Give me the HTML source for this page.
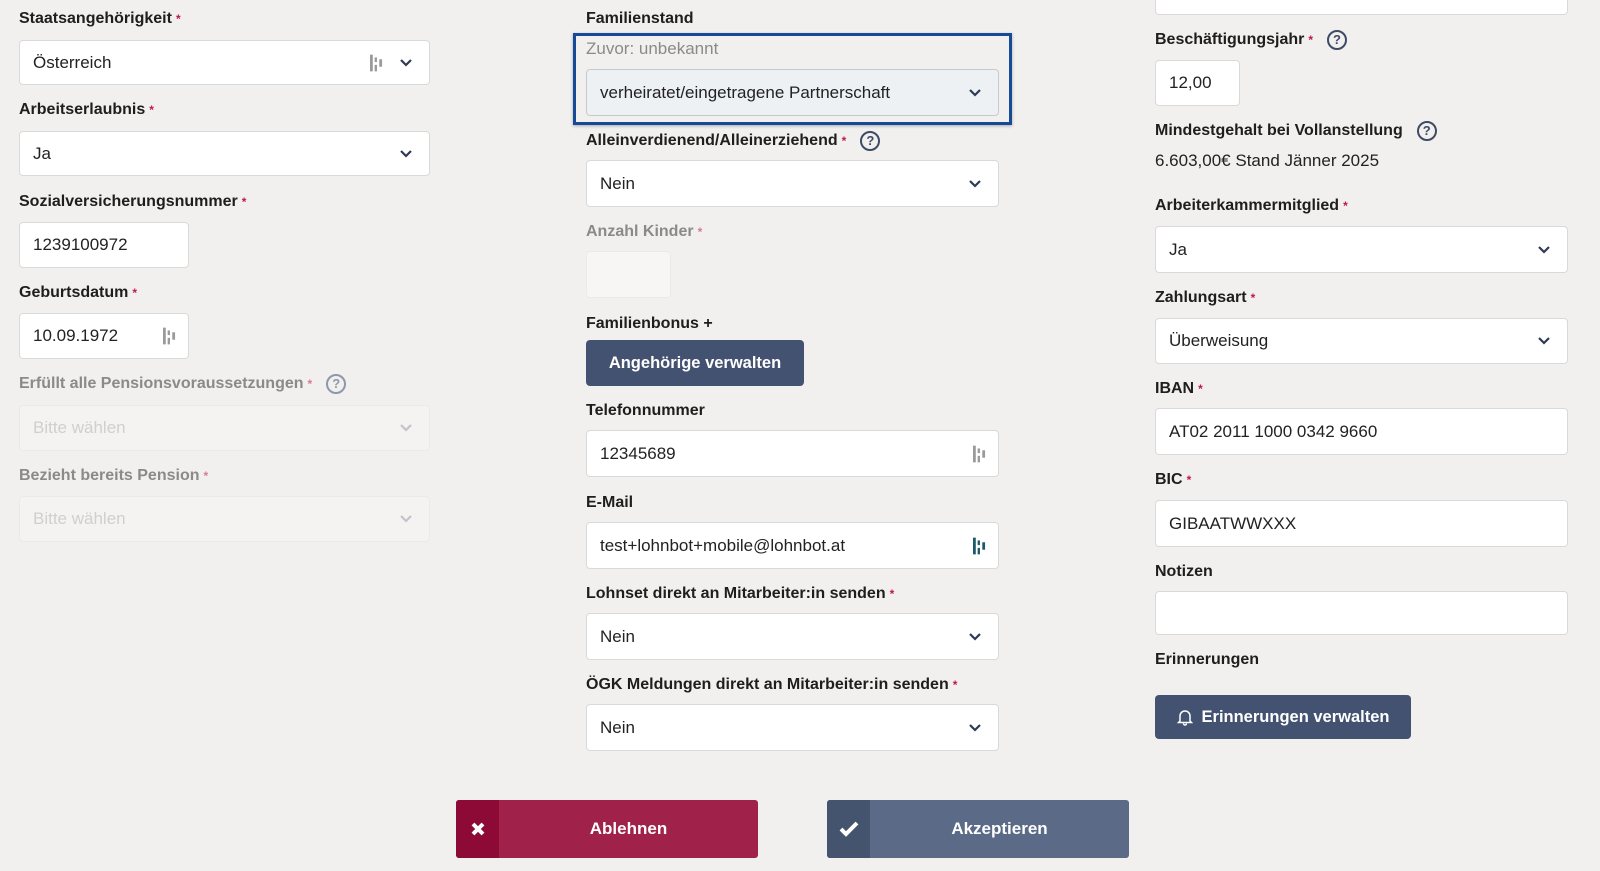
<!DOCTYPE html>
<html><head><meta charset="utf-8"><style>
*{box-sizing:border-box;margin:0;padding:0}
body{width:1600px;height:871px;background:#f1f0ee;font-family:"Liberation Sans",sans-serif;color:#222;position:relative;overflow:hidden}
.l{position:absolute;font-size:16px;font-weight:bold;line-height:20px;color:#1e1e1e;white-space:nowrap}
.l .r{color:#c0184c;font-size:12px;vertical-align:top;margin-left:4px}
.l.g{color:#8a8a8a}.l.g .r{color:#d77a96}
.b{position:absolute;background:#fff;border:1px solid #d9d9d9;border-radius:4px;font-size:17px;line-height:20px;padding:0 13px;display:flex;align-items:center;color:#222}
.b.d{background:#f4f3f2;border-color:#ebeae8;color:#d0cfcd}
.chev{position:absolute;right:16px;top:50%;margin-top:-5px}
.pm{position:absolute;right:46px;top:50%;margin-top:-9px}
.pm2{position:absolute;right:12px;top:50%;margin-top:-9px}
.q{display:inline-block;width:20px;height:20px;border:2px solid #3e4a66;border-radius:50%;font-size:13px;line-height:16px;text-align:center;color:#3e4a66;margin-left:14px;vertical-align:0px;font-weight:bold}
.btn{position:absolute;background:#445271;color:#fff;border-radius:4px;font-weight:bold;font-size:16.5px;display:flex;align-items:center;justify-content:center}
</style></head><body>
<svg width="0" height="0" style="position:absolute"><defs>
<symbol id="cv" viewBox="0 0 14 10"><path d="M2 2l5 5 5-5" fill="none" stroke="#2f3b55" stroke-width="2.2"/></symbol>
<symbol id="pmi" viewBox="0 0 14 18"><rect x="0" y="0" width="3" height="18" fill="currentColor"/><rect x="5" y="3" width="2.5" height="5" fill="currentColor"/><rect x="5" y="11" width="2.5" height="7" fill="currentColor"/><rect x="10" y="5" width="3" height="8" fill="currentColor"/></symbol>
</defs></svg>

<!-- column 1 -->
<div class="l" style="left:19px;top:9px">Staatsangehörigkeit<span class="r">*</span></div>
<div class="b" style="left:19px;top:40px;width:411px;height:45px">Österreich<svg class="pm" width="13" height="18" style="color:#9a9a9a"><use href="#pmi"/></svg><svg class="chev" width="14" height="10"><use href="#cv"/></svg></div>
<div class="l" style="left:19px;top:100px">Arbeitserlaubnis<span class="r">*</span></div>
<div class="b" style="left:19px;top:131px;width:411px;height:45px">Ja<svg class="chev" width="14" height="10"><use href="#cv"/></svg></div>
<div class="l" style="left:19px;top:192px">Sozialversicherungsnummer<span class="r">*</span></div>
<div class="b" style="left:19px;top:222px;width:170px;height:46px">1239100972</div>
<div class="l" style="left:19px;top:283px">Geburtsdatum<span class="r">*</span></div>
<div class="b" style="left:19px;top:313px;width:170px;height:46px">10.09.1972<svg class="pm2" width="13" height="18" style="color:#9a9a9a"><use href="#pmi"/></svg></div>
<div class="l g" style="left:19px;top:374px">Erfüllt alle Pensionsvoraussetzungen<span class="r">*</span><span class="q" style="border-color:#8f97ab;color:#8f97ab">?</span></div>
<div class="b d" style="left:19px;top:405px;width:411px;height:46px">Bitte wählen<svg class="chev" width="14" height="10" style="opacity:.25"><use href="#cv"/></svg></div>
<div class="l g" style="left:19px;top:466px">Bezieht bereits Pension<span class="r">*</span></div>
<div class="b d" style="left:19px;top:496px;width:411px;height:46px">Bitte wählen<svg class="chev" width="14" height="10" style="opacity:.25"><use href="#cv"/></svg></div>

<!-- column 2 -->
<div class="l" style="left:586px;top:9px">Familienstand</div>
<div style="position:absolute;left:573px;top:33px;width:439px;height:92px;border:3px solid #174a96;box-shadow:0 1px 3px rgba(0,0,0,.3)"></div>
<div style="position:absolute;left:586px;top:39px;font-size:17px;line-height:20px;color:#8a8a8a">Zuvor: unbekannt</div>
<div class="b" style="left:586px;top:69px;width:413px;height:47px;background:#eef1f4;border-color:#c6c9ce">verheiratet/eingetragene Partnerschaft<svg class="chev" width="14" height="10"><use href="#cv"/></svg></div>
<div class="l" style="left:586px;top:131px">Alleinverdienend/Alleinerziehend<span class="r">*</span><span class="q">?</span></div>
<div class="b" style="left:586px;top:160px;width:413px;height:47px">Nein<svg class="chev" width="14" height="10"><use href="#cv"/></svg></div>
<div class="l g" style="left:586px;top:222px">Anzahl Kinder<span class="r">*</span></div>
<div class="b" style="left:586px;top:251px;width:85px;height:47px;background:#f7f6f5;border-color:#eceae8"></div>
<div class="l" style="left:586px;top:314px">Familienbonus +</div>
<div class="btn" style="left:586px;top:340px;width:218px;height:46px">Angehörige verwalten</div>
<div class="l" style="left:586px;top:401px">Telefonnummer</div>
<div class="b" style="left:586px;top:430px;width:413px;height:47px">12345689<svg class="pm2" width="13" height="18" style="color:#9a9a9a"><use href="#pmi"/></svg></div>
<div class="l" style="left:586px;top:493px">E-Mail</div>
<div class="b" style="left:586px;top:522px;width:413px;height:47px">test+lohnbot+mobile@lohnbot.at<svg class="pm2" width="13" height="18" style="color:#1c5a6a"><use href="#pmi"/></svg></div>
<div class="l" style="left:586px;top:584px">Lohnset direkt an Mitarbeiter:in senden<span class="r">*</span></div>
<div class="b" style="left:586px;top:613px;width:413px;height:47px">Nein<svg class="chev" width="14" height="10"><use href="#cv"/></svg></div>
<div class="l" style="left:586px;top:675px">ÖGK Meldungen direkt an Mitarbeiter:in senden<span class="r">*</span></div>
<div class="b" style="left:586px;top:704px;width:413px;height:47px">Nein<svg class="chev" width="14" height="10"><use href="#cv"/></svg></div>

<!-- column 3 -->
<div class="b" style="left:1155px;top:-30px;width:413px;height:45px"></div>
<div class="l" style="left:1155px;top:30px">Beschäftigungsjahr<span class="r">*</span><span class="q">?</span></div>
<div class="b" style="left:1155px;top:60px;width:85px;height:46px">12,00</div>
<div class="l" style="left:1155px;top:121px">Mindestgehalt bei Vollanstellung<span class="q">?</span></div>
<div style="position:absolute;left:1155px;top:151px;font-size:17px;line-height:20px;color:#222">6.603,00€ Stand Jänner 2025</div>
<div class="l" style="left:1155px;top:196px">Arbeiterkammermitglied<span class="r">*</span></div>
<div class="b" style="left:1155px;top:226px;width:413px;height:47px">Ja<svg class="chev" width="14" height="10"><use href="#cv"/></svg></div>
<div class="l" style="left:1155px;top:288px">Zahlungsart<span class="r">*</span></div>
<div class="b" style="left:1155px;top:318px;width:413px;height:46px">Überweisung<svg class="chev" width="14" height="10"><use href="#cv"/></svg></div>
<div class="l" style="left:1155px;top:379px">IBAN<span class="r">*</span></div>
<div class="b" style="left:1155px;top:408px;width:413px;height:47px">AT02 2011 1000 0342 9660</div>
<div class="l" style="left:1155px;top:470px">BIC<span class="r">*</span></div>
<div class="b" style="left:1155px;top:500px;width:413px;height:47px">GIBAATWWXXX</div>
<div class="l" style="left:1155px;top:562px">Notizen</div>
<div class="b" style="left:1155px;top:591px;width:413px;height:44px"></div>
<div class="l" style="left:1155px;top:650px">Erinnerungen</div>
<div class="btn" style="left:1155px;top:695px;width:256px;height:44px"><svg width="16" height="18" viewBox="0 0 16 18" style="margin-right:9px"><path d="M3 13V8a5 5 0 0 1 10 0v5l1.5 1.5h-13z M6.5 15.5a1.5 1.5 0 0 0 3 0" fill="none" stroke="#fff" stroke-width="1.5"/></svg>Erinnerungen verwalten</div>

<!-- bottom buttons -->
<div style="position:absolute;left:456px;top:800px;width:302px;height:58px;background:#a0214a;border-radius:3px;overflow:hidden;color:#fff;font-weight:bold;font-size:17px">
<div style="position:absolute;left:0;top:0;width:43px;height:58px;background:#8e0a36;display:flex;align-items:center;justify-content:center"><svg width="16" height="16" viewBox="0 0 16 16"><path d="M3 3l10 10M13 3L3 13" stroke="#fff" stroke-width="4"/></svg></div>
<div style="position:absolute;left:43px;right:0;top:0;height:58px;display:flex;align-items:center;justify-content:center">Ablehnen</div></div>
<div style="position:absolute;left:827px;top:800px;width:302px;height:58px;background:#5b6a86;border-radius:3px;overflow:hidden;color:#fff;font-weight:bold;font-size:17px">
<div style="position:absolute;left:0;top:0;width:43px;height:58px;background:#44546f;display:flex;align-items:center;justify-content:center"><svg width="20" height="16" viewBox="0 0 20 16"><path d="M2 8l5 5L18 2" fill="none" stroke="#fff" stroke-width="4"/></svg></div>
<div style="position:absolute;left:43px;right:0;top:0;height:58px;display:flex;align-items:center;justify-content:center">Akzeptieren</div></div>
</body></html>
